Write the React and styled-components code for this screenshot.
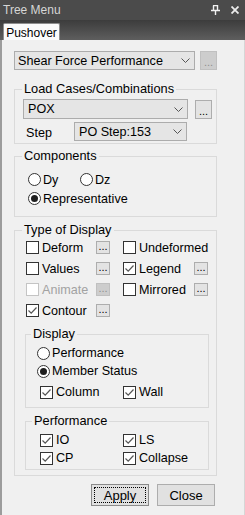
import React from 'react'
import styled, { createGlobalStyle } from 'styled-components'

const GlobalStyle = createGlobalStyle`
  html, body { margin: 0; padding: 0; background: #f0f0f0; }
  body {
    font-family: "Liberation Sans", Arial, sans-serif;
    font-size: 12.6px;
    color: #000;
  }
  * { box-sizing: border-box; }
`

const Panel = styled.div`
  width: 245px;
  height: 515px;
  display: flex;
  flex-direction: column;
  overflow: hidden;
`

const TitleBar = styled.div`
  height: 20px;
  background: #4b4b4b;
  display: flex;
  align-items: center;
  padding: 0 6px 0 3px;
  color: #d6d6d6;
  font-size: 12px;
`

const TitleText = styled.span`
  flex: 1;
`

const TitleIcons = styled.div`
  display: flex;
  align-items: center;
  gap: 11px;
`

const TabStrip = styled.div`
  height: 20px;
  background: linear-gradient(#3c3c3c, #5e5e5e);
  display: flex;
  align-items: flex-end;
  padding-left: 3px;
`

const Tab = styled.div`
  height: 17px;
  width: 57px;
  background: #fbfbfb;
  border: 1px solid #8e8e8e;
  border-bottom: none;
  border-radius: 2px 2px 0 0;
  font-size: 12px;
  display: flex;
  align-items: center;
  justify-content: center;
  padding-top: 1px;
`

const Body = styled.div`
  flex: 1;
  background: #f0f0f0;
  border-left: 2px solid #9c9c9c;
  border-right: 1px solid #d6d6d6;
  padding: 11px 0 0 12px;
`

const Column = styled.div`
  width: 203px;
  display: flex;
  flex-direction: column;
`

const Row = styled.div`
  display: flex;
  align-items: ${p => p.align || 'center'};
  gap: ${p => p.gap || 0}px;
  margin-top: ${p => p.mt || 0}px;
  margin-left: ${p => p.ml || 0}px;
`

const Combo = styled.div`
  width: ${p => p.w}px;
  height: ${p => p.h}px;
  background: #e5e5e5;
  border: 1px solid #acacac;
  display: flex;
  align-items: center;
  padding-left: ${p => p.pl || 3}px;
  padding-right: 4px;
`

const ComboText = styled.span`
  flex: 1;
  white-space: nowrap;
  overflow: hidden;
`

const DotsButton = styled.div`
  width: ${p => p.w}px;
  height: ${p => p.h}px;
  margin-top: ${p => p.mt || 0}px;
  background: ${p => (p.disabled ? '#cdcdcd' : '#e3e3e3')};
  border: 1px solid ${p => (p.disabled ? '#c0c0c0' : '#adadad')};
  color: ${p => (p.disabled ? '#8f8f8f' : '#000')};
  display: flex;
  align-items: flex-end;
  justify-content: center;
  font-size: 11px;
  line-height: 11px;
  padding-bottom: 1px;
`

const Group = styled.fieldset`
  margin: ${p => p.mt || 0}px 0 0 0;
  padding: ${p => p.pt || 0}px 0 ${p => p.pb || 0}px 0;
  border: 1px solid #dadada;
  min-width: 0;
  width: ${p => (p.w ? `${p.w}px` : 'auto')};
`

const Legend = styled.legend`
  margin-left: ${p => p.ml || 7}px;
  padding: 0 2px;
  line-height: 14px;
  font-size: 12.8px;
`

const GroupBody = styled.div`
  padding-left: ${p => p.pl}px;
  display: flex;
  flex-direction: column;
`

const StepLabel = styled.span`
  width: 51px;
  padding-left: 3px;
  padding-top: 2px;
`

const Option = styled.label`
  display: flex;
  align-items: center;
  gap: ${p => p.gap ?? 3}px;
  height: ${p => p.h || 18}px;
  width: ${p => (p.w ? `${p.w}px` : 'auto')};
  color: ${p => (p.disabled ? '#a2a2a2' : '#000')};
  white-space: nowrap;
`

const RadioDot = styled.span`
  width: 13px;
  height: 13px;
  border-radius: 50%;
  border: 1px solid #333;
  background: #fff;
  display: flex;
  align-items: center;
  justify-content: center;
  flex-shrink: 0;
  &::after {
    content: '';
    width: 7px;
    height: 7px;
    border-radius: 50%;
    background: ${p => (p.on ? '#1e1e1e' : 'transparent')};
  }
`

const Box = styled.span`
  width: 13px;
  height: 13px;
  border: 1px solid ${p => (p.disabled ? '#c4c4c4' : '#333')};
  background: #fff;
  display: flex;
  align-items: center;
  justify-content: center;
  flex-shrink: 0;
`

const DisplayGrid = styled.div`
  display: grid;
  grid-template-columns: 70px 27px 71px 14px;
  grid-auto-rows: 21px;
  align-items: center;
  margin-left: 1px;
`

const ButtonRow = styled.div`
  display: flex;
  justify-content: flex-end;
  gap: 8px;
  margin: 8px 2px 0 0;
`

const Button = styled.div`
  width: 58px;
  height: 22px;
  background: #e1e1e1;
  border: 1px solid ${p => (p.focused ? '#8a8a8a' : '#adadad')};
  display: flex;
  align-items: center;
  justify-content: center;
  font-size: 13px;
  outline: ${p => (p.focused ? '1px dotted #000' : 'none')};
  outline-offset: -4px;
`

const Chevron = () => (
  <svg width="9" height="5" viewBox="0 0 9 5">
    <path d="M0.5 0.5L4.5 4.5L8.5 0.5" fill="none" stroke="#555" strokeWidth="1" />
  </svg>
)

const CheckMark = () => (
  <svg width="11" height="11" viewBox="0 0 11 11">
    <path d="M1.5 5.5L4.2 8.2L9.5 2.5" fill="none" stroke="#555" strokeWidth="1.2" />
  </svg>
)

const PinIcon = () => (
  <svg width="9" height="10" viewBox="0 0 9 10">
    <path d="M2 0.5H6.5V5.5M2.5 0.5V5.5" fill="none" stroke="#f2f2f2" strokeWidth="1.4" />
    <path d="M0 5.5H9M4.5 5.5V10" fill="none" stroke="#f2f2f2" strokeWidth="1.4" />
  </svg>
)

const CloseIcon = () => (
  <svg width="8" height="8" viewBox="0 0 8 8">
    <path d="M0.5 0.5L7.5 7.5M7.5 0.5L0.5 7.5" stroke="#ececec" strokeWidth="1.8" />
  </svg>
)

const Radio = ({ on, label, w, h }) => (
  <Option w={w} h={h} gap={2}>
    <RadioDot on={on} />
    {label}
  </Option>
)

const Check = ({ on, label, w, h, disabled }) => (
  <Option w={w} h={h} disabled={disabled}>
    <Box disabled={disabled}>{on && <CheckMark />}</Box>
    {label}
  </Option>
)

const displayRows = [
  [{ label: 'Deform' }, { label: 'Undeformed', noDots: true }],
  [{ label: 'Values' }, { label: 'Legend', on: true }],
  [{ label: 'Animate', disabled: true }, { label: 'Mirrored' }],
  [{ label: 'Contour', on: true }, null],
]

export default function App() {
  return (
    <Panel>
      <GlobalStyle />
      <TitleBar>
        <TitleText>Tree Menu</TitleText>
        <TitleIcons>
          <PinIcon />
          <CloseIcon />
        </TitleIcons>
      </TitleBar>
      <TabStrip>
        <Tab>Pushover</Tab>
      </TabStrip>
      <Body>
        <Column>
          <Row gap={5}>
            <Combo w={183} h={19}>
              <ComboText>Shear Force Performance</ComboText>
              <Chevron />
            </Combo>
            <DotsButton w={17} h={19} disabled>...</DotsButton>
          </Row>

          <Group mt={12} pt={3} pb={2}>
            <Legend>Load Cases/Combinations</Legend>
            <GroupBody pl={8}>
              <Row gap={7} align="flex-start">
                <Combo w={165} h={20} pl={4}>
                  <ComboText>POX</ComboText>
                  <Chevron />
                </Combo>
                <DotsButton w={17} h={19} mt={1}>...</DotsButton>
              </Row>
              <Row mt={3}>
                <StepLabel>Step</StepLabel>
                <Combo w={113} h={19} pl={4}>
                  <ComboText>PO Step:153</ComboText>
                  <Chevron />
                </Combo>
              </Row>
            </GroupBody>
          </Group>

          <Group mt={5} pt={7} pb={8}>
            <Legend>Components</Legend>
            <GroupBody pl={13}>
              <Row>
                <Radio label="Dy" w={52} h={19} />
                <Radio label="Dz" h={19} />
              </Row>
              <Radio on label="Representative" h={19} />
            </GroupBody>
          </Group>

          <Group mt={6} pb={5}>
            <Legend>Type of Display</Legend>
            <GroupBody pl={10}>
              <DisplayGrid>
                {displayRows.map((row, i) => (
                  <React.Fragment key={i}>
                    <Check on={row[0].on} label={row[0].label} disabled={row[0].disabled} h={21} />
                    <DotsButton w={14} h={13} disabled={row[0].disabled}>...</DotsButton>
                    {row[1] ? <Check on={row[1].on} label={row[1].label} h={21} /> : <span />}
                    {row[1] && !row[1].noDots ? <DotsButton w={14} h={13}>...</DotsButton> : <span />}
                  </React.Fragment>
                ))}
              </DisplayGrid>

              <Group mt={6} w={184} pt={3} pb={5}>
                <Legend ml={5}>Display</Legend>
                <GroupBody pl={11}>
                  <Radio label="Performance" />
                  <Radio on label="Member Status" />
                  <Row mt={2} ml={3}>
                    <Check on label="Column" w={83} h={20} />
                    <Check on label="Wall" h={20} />
                  </Row>
                </GroupBody>
              </Group>

              <Group mt={6} w={184} pt={3} pb={2}>
                <Legend ml={6}>Performance</Legend>
                <GroupBody pl={14}>
                  <Row>
                    <Check on label="IO" w={83} />
                    <Check on label="LS" />
                  </Row>
                  <Row>
                    <Check on label="CP" w={83} />
                    <Check on label="Collapse" />
                  </Row>
                </GroupBody>
              </Group>
            </GroupBody>
          </Group>

          <ButtonRow>
            <Button focused>Apply</Button>
            <Button>Close</Button>
          </ButtonRow>
        </Column>
      </Body>
    </Panel>
  )
}
